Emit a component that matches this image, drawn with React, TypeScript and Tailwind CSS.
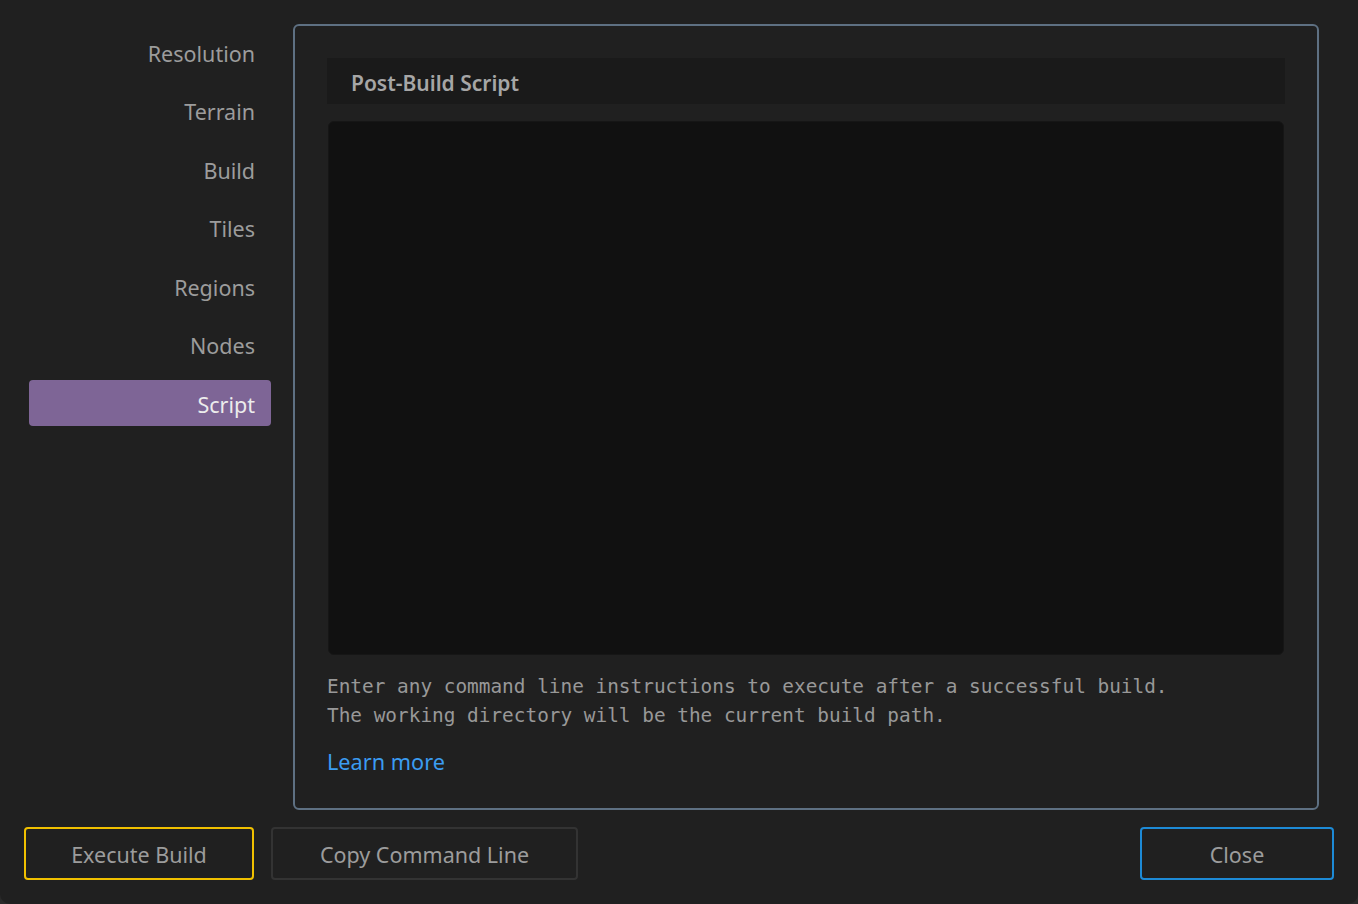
import React from "react";

const sections = ["Resolution", "Terrain", "Build", "Tiles", "Regions", "Nodes", "Script"];

export default function App() {
  const active = "Script";

  return (
    <div className="w-[1358px] h-[904px] bg-[#2a2a2a]">
      <div className="flex flex-col w-full h-full bg-[#202020] rounded-b-[10px] font-['Noto_Sans',sans-serif]">
        <div className="flex items-start">
          {/* Section list */}
          <nav className="flex flex-col gap-[12.5px] w-[242px] ml-[29px] mt-[29px]">
            {sections.map((s) => (
              <div
                key={s}
                className={
                  s === active
                    ? "h-[46px] flex items-center justify-end pr-[16px] pt-[4px] rounded-[4px] bg-[#7e6596] text-[#ececec] text-[21.5px]"
                    : "h-[46px] flex items-center justify-end pr-[16px] pt-[4px] text-[#9c9c9c] text-[21.5px]"
                }
              >
                {s}
              </div>
            ))}
          </nav>

          {/* Script panel */}
          <section className="ml-[22px] mt-[24px] w-[1026px] h-[786px] border-2 border-[#5e7082] rounded-[6px] px-[32px] pt-[32px] flex flex-col">
            <div className="h-[46px] bg-[#1a1a1a] flex items-center pl-[24px] pt-[5px] text-[21px] font-semibold text-[#a6a6a6]">
              Post-Build Script
            </div>
            <textarea
              className="mt-[17px] mx-px h-[534px] bg-[#111111] rounded-[6px] resize-none outline-none border border-[#161616]"
              spellCheck={false}
            />
            <div className="mt-[17px] font-['DejaVu_Sans_Mono',monospace] text-[19.4px] leading-[29px] text-[#989898] whitespace-pre">
              <p>Enter any command line instructions to execute after a successful build.</p>
              <p>The working directory will be the current build path.</p>
            </div>
            <a href="#" className="mt-[17px] text-[21.7px] text-[#3b9cf1] leading-[30px] self-start">
              Learn more
            </a>
          </section>
        </div>

        {/* Footer buttons */}
        <div className="flex items-center mt-[17px] px-[24px]">
          <button className="w-[230px] h-[53px] pt-[3px] border-2 border-[#f0c000] rounded-[4px] text-[21.5px] text-[#9c9c9c]">
            Execute Build
          </button>
          <button className="ml-[17px] w-[307px] h-[53px] pt-[3px] border-2 border-[#333333] rounded-[4px] text-[21.5px] text-[#9c9c9c]">
            Copy Command Line
          </button>
          <button className="ml-auto w-[194px] h-[53px] pt-[3px] border-2 border-[#1d8ad6] rounded-[4px] text-[21.5px] text-[#9c9c9c]">
            Close
          </button>
        </div>
      </div>
    </div>
  );
}
